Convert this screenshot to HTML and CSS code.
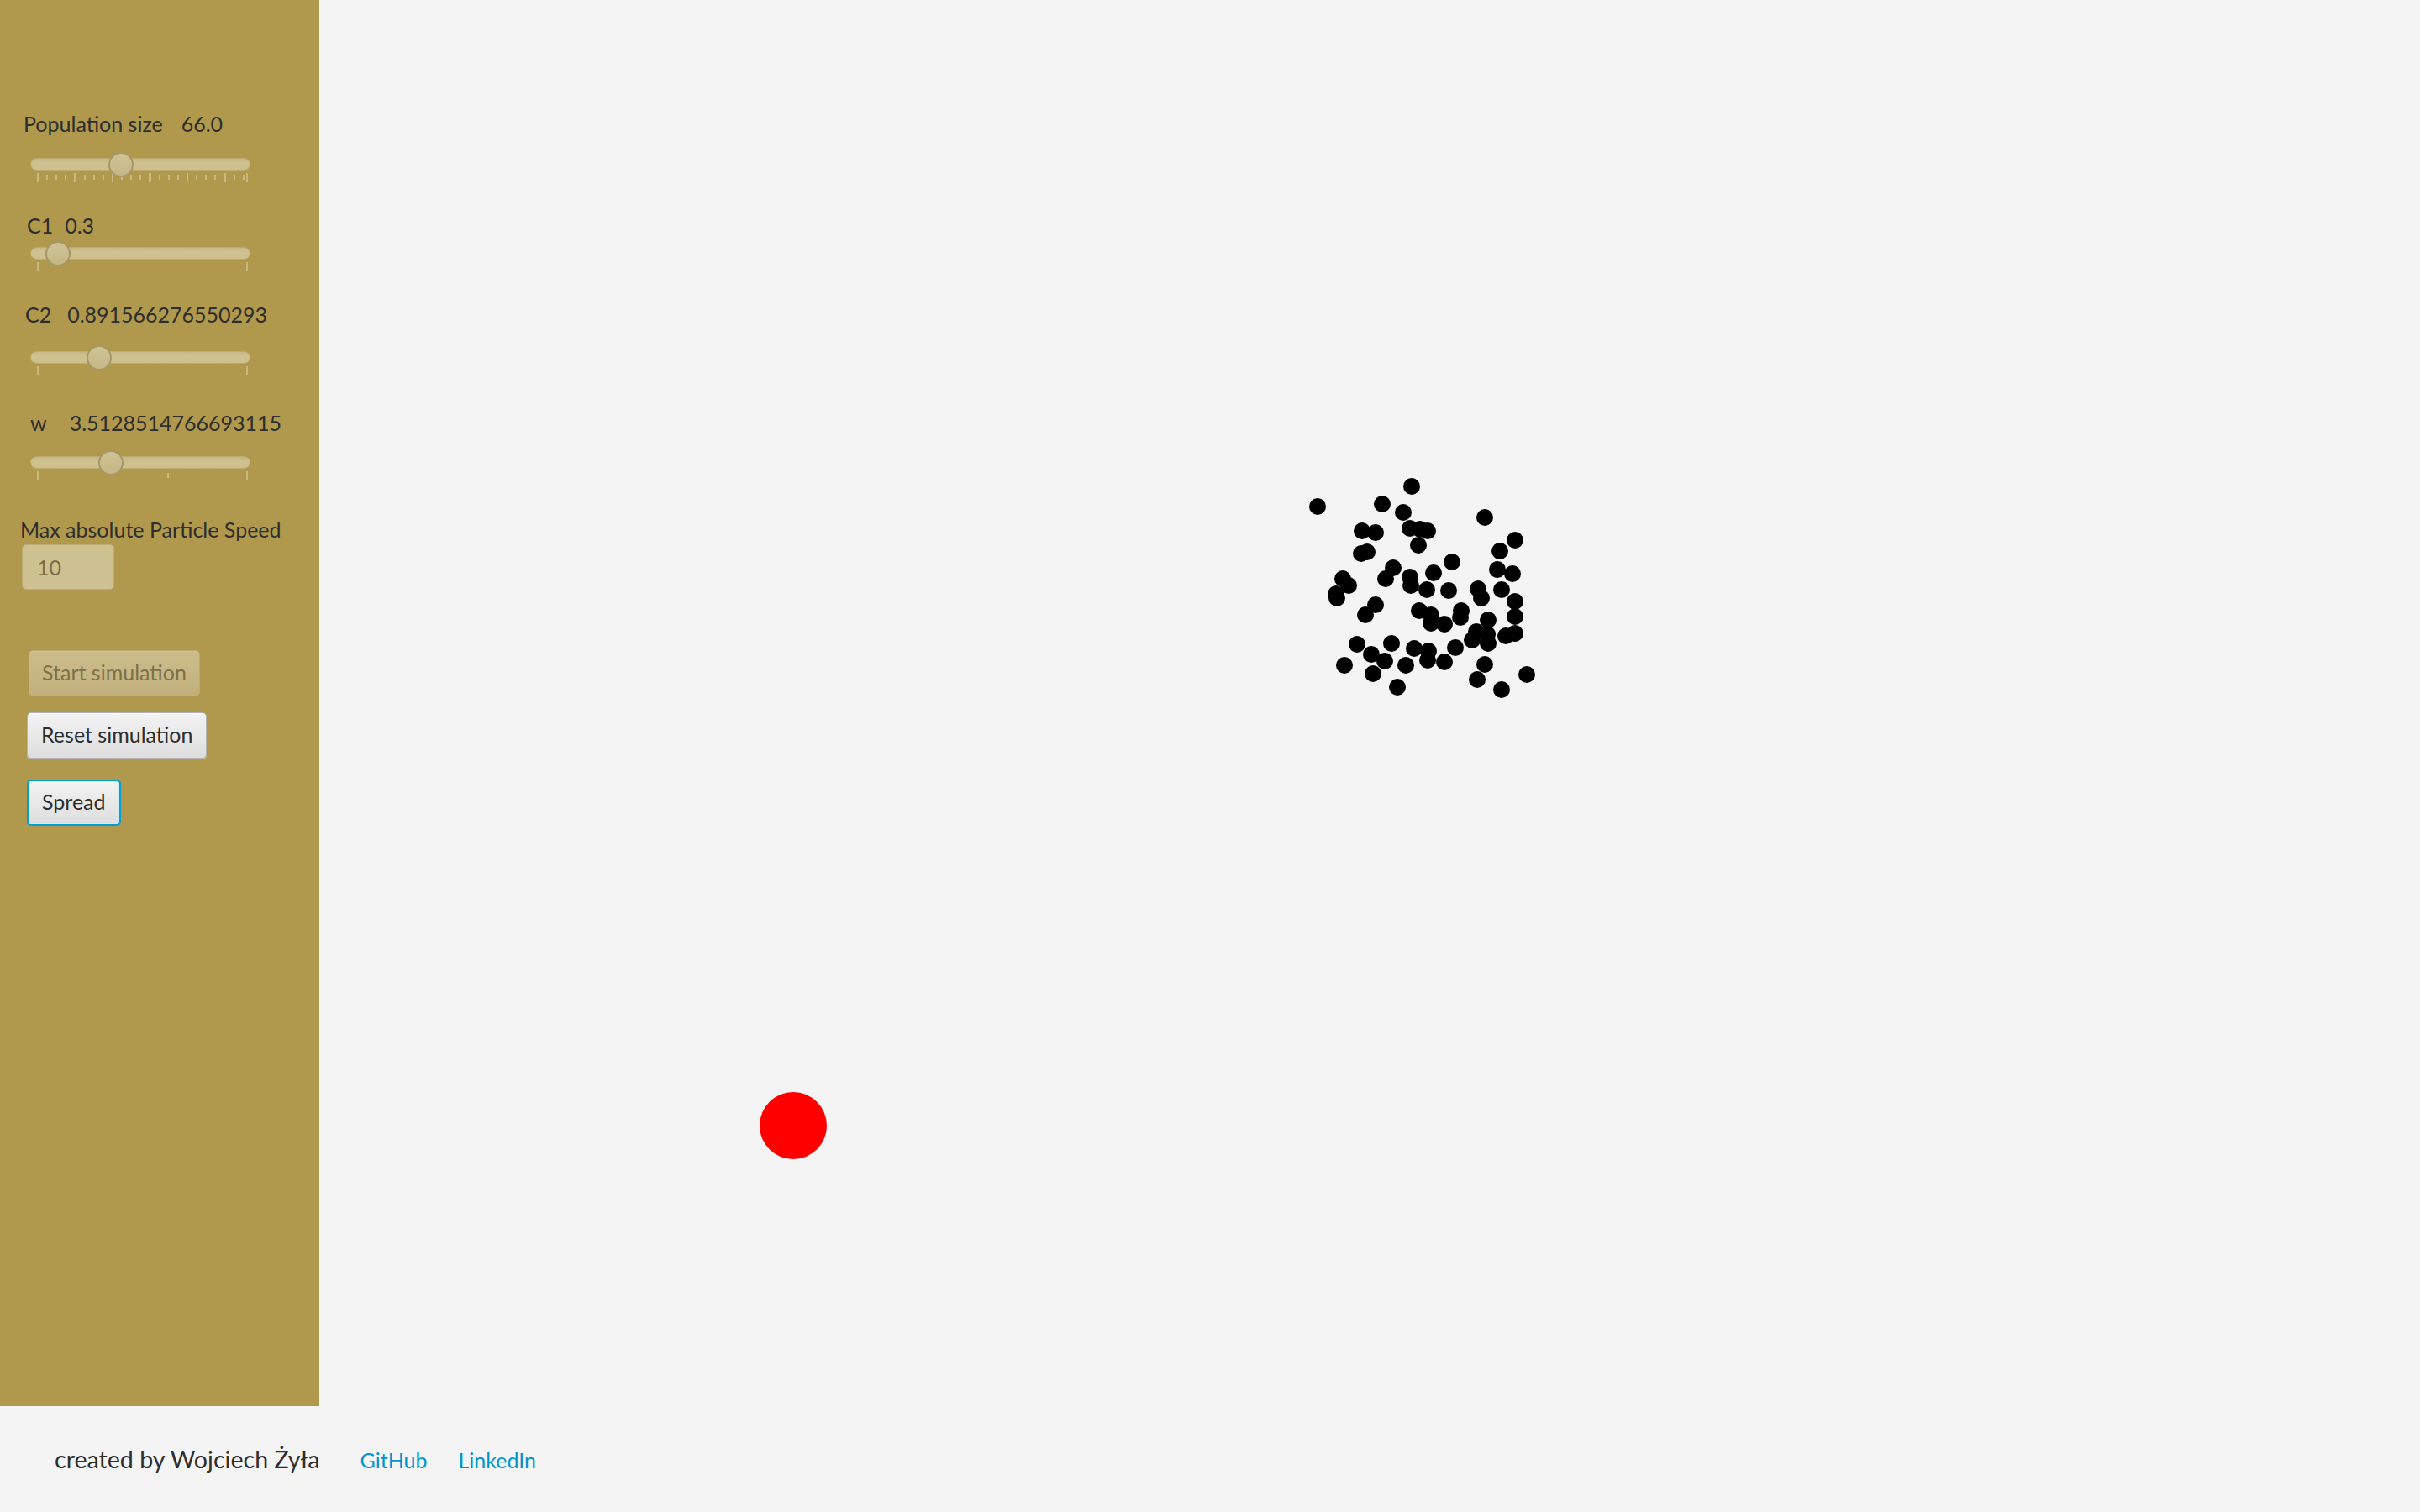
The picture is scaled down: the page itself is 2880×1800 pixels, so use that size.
FILE: index.html
```html
<!DOCTYPE html>
<html lang="en">
    <head>
        <meta charset="utf-8" />
        <meta name="viewport" content="width=device-width, initial-scale=1">
        <title>PSO simulation</title>
        <link rel="stylesheet" href="styles.css">
    </head>
    <body>
        <div class="app">
            <!-- settings panel -->
            <div class="sidebar">
                <div class="param param-pop">
                    <span class="param-name">Population size</span>
                    <span class="param-value">66.0</span>
                </div>
                <div class="slider slider-pop">
                    <div class="track"></div>
                    <div class="thumb" style="left: 93px"></div>
                    <div class="ticks ticks-fine"></div>
                </div>

                <div class="param param-c1">
                    <span class="param-name">C1</span>
                    <span class="param-value">0.3</span>
                </div>
                <div class="slider slider-c1">
                    <div class="track"></div>
                    <div class="thumb" style="left: 18px"></div>
                    <div class="ticks ticks-ends"></div>
                </div>

                <div class="param param-c2">
                    <span class="param-name">C2</span>
                    <span class="param-value">0.891566276550293</span>
                </div>
                <div class="slider slider-c2">
                    <div class="track"></div>
                    <div class="thumb" style="left: 67px"></div>
                    <div class="ticks ticks-ends"></div>
                </div>

                <div class="param param-w">
                    <span class="param-name">w</span>
                    <span class="param-value">3.5128514766693115</span>
                </div>
                <div class="slider slider-w">
                    <div class="track"></div>
                    <div class="thumb" style="left: 81px"></div>
                    <div class="ticks ticks-ends ticks-mid"></div>
                </div>

                <div class="param param-speed">
                    <span class="param-name">Max absolute Particle Speed</span>
                </div>
                <input class="speed-input" type="text" value="10">

                <button class="btn btn-start" disabled>Start simulation</button>
                <button class="btn btn-reset">Reset simulation</button>
                <button class="btn btn-spread">Spread</button>
            </div>

            <!-- simulation canvas -->
            <div class="canvas">
                <svg class="field" width="2500" height="1674" viewBox="0 0 2500 1674">
                    <circle class="target" cx="564" cy="1340" r="40" />
                    <g class="particles">
                        <circle cx="1300" cy="579" r="10" />
                        <circle cx="1188" cy="603" r="10" />
                        <circle cx="1265" cy="600" r="10" />
                        <circle cx="1290" cy="610" r="10" />
                        <circle cx="1387" cy="616" r="10" />
                        <circle cx="1241" cy="632" r="10" />
                        <circle cx="1257" cy="634" r="10" />
                        <circle cx="1298" cy="629" r="10" />
                        <circle cx="1310" cy="630" r="10" />
                        <circle cx="1319" cy="632" r="10" />
                        <circle cx="1308" cy="649" r="10" />
                        <circle cx="1423" cy="643" r="10" />
                        <circle cx="1405" cy="656" r="10" />
                        <circle cx="1247" cy="657" r="10" />
                        <circle cx="1240" cy="659" r="10" />
                        <circle cx="1348" cy="669" r="10" />
                        <circle cx="1278" cy="676" r="10" />
                        <circle cx="1269" cy="689" r="10" />
                        <circle cx="1298" cy="687" r="10" />
                        <circle cx="1326" cy="682" r="10" />
                        <circle cx="1402" cy="678" r="10" />
                        <circle cx="1420" cy="683" r="10" />
                        <circle cx="1218" cy="689" r="10" />
                        <circle cx="1225" cy="697" r="10" />
                        <circle cx="1210" cy="707" r="10" />
                        <circle cx="1211" cy="712" r="10" />
                        <circle cx="1299" cy="697" r="10" />
                        <circle cx="1318" cy="702" r="10" />
                        <circle cx="1344" cy="703" r="10" />
                        <circle cx="1379" cy="701" r="10" />
                        <circle cx="1383" cy="712" r="10" />
                        <circle cx="1407" cy="702" r="10" />
                        <circle cx="1423" cy="716" r="10" />
                        <circle cx="1257" cy="720" r="10" />
                        <circle cx="1245" cy="732" r="10" />
                        <circle cx="1309" cy="727" r="10" />
                        <circle cx="1323" cy="732" r="10" />
                        <circle cx="1323" cy="742" r="10" />
                        <circle cx="1339" cy="743" r="10" />
                        <circle cx="1359" cy="727" r="10" />
                        <circle cx="1358" cy="735" r="10" />
                        <circle cx="1391" cy="738" r="10" />
                        <circle cx="1423" cy="734" r="10" />
                        <circle cx="1377" cy="752" r="10" />
                        <circle cx="1372" cy="762" r="10" />
                        <circle cx="1390" cy="755" r="10" />
                        <circle cx="1391" cy="766" r="10" />
                        <circle cx="1412" cy="757" r="10" />
                        <circle cx="1423" cy="754" r="10" />
                        <circle cx="1235" cy="767" r="10" />
                        <circle cx="1276" cy="766" r="10" />
                        <circle cx="1303" cy="772" r="10" />
                        <circle cx="1320" cy="775" r="10" />
                        <circle cx="1319" cy="786" r="10" />
                        <circle cx="1352" cy="771" r="10" />
                        <circle cx="1252" cy="779" r="10" />
                        <circle cx="1268" cy="787" r="10" />
                        <circle cx="1220" cy="792" r="10" />
                        <circle cx="1293" cy="792" r="10" />
                        <circle cx="1339" cy="788" r="10" />
                        <circle cx="1387" cy="791" r="10" />
                        <circle cx="1254" cy="802" r="10" />
                        <circle cx="1378" cy="809" r="10" />
                        <circle cx="1437" cy="803" r="10" />
                        <circle cx="1283" cy="818" r="10" />
                        <circle cx="1407" cy="821" r="10" />
                    </g>
                </svg>
            </div>
        </div>

        <!-- footer -->
        <div class="footer">
            <span class="credit">created by Wojciech Żyła</span>
            <a class="footer-link link-github" href="#">GitHub</a>
            <a class="footer-link link-linkedin" href="#">LinkedIn</a>
        </div>
    </body>
</html>
```

FILE: styles.css
```css
body {
    margin: 0;
    background-color: #f4f4f4;
    font-family: Lato, "Liberation Sans", sans-serif;
    color: #333;
}

.app {
    display: flex;
    height: 1674px;
}

/* left settings panel */
.sidebar {
    width: 380px;
    flex-shrink: 0;
    box-sizing: border-box;
    padding-top: 132px;
    background-color: #b0994c;
    display: flex;
    flex-direction: column;
    align-items: flex-start;
}

.param {
    display: flex;
    height: 30px;
    font-size: 25px;
    line-height: 30px;
    white-space: nowrap;
    color: #2e2e2e;
}

.param-pop { padding-left: 28px; }
.param-pop .param-value { margin-left: 22px; }

.param-c1 { padding-left: 32px; margin-top: 36px; }
.param-c1 .param-value { margin-left: 14px; }

.param-c2 { padding-left: 30px; margin-top: 36px; }
.param-c2 .param-value { margin-left: 19px; }

.param-w { padding-left: 36px; margin-top: 41px; }
.param-w .param-value { margin-left: 27px; }

.param-speed { padding-left: 24px; margin-top: 43px; }

/* sliders */
.slider {
    position: relative;
    width: 262px;
    margin-left: 36px;
}

.slider-pop { margin-top: 26px; }
.slider-c1 { margin-top: 11px; }
.slider-c2 { margin-top: 29px; }
.slider-w { margin-top: 25px; }

.track {
    height: 15px;
    box-sizing: border-box;
    border: 1px solid #bcab70;
    border-radius: 8px;
    background: linear-gradient(#c6b883, #cfc291 40%, #cdc08e);
}

.thumb {
    position: absolute;
    top: -7.5px;
    width: 30px;
    height: 30px;
    box-sizing: border-box;
    border: 2px solid #a6976a;
    border-radius: 50%;
    background: linear-gradient(#cfc395, #c5b785);
}

.ticks {
    width: 251px;
    height: 11px;
    margin: 3px 0 0 8px;
}

.ticks-fine {
    background:
        linear-gradient(#c8b983, #c8b983) right top / 2px 11px no-repeat,
        repeating-linear-gradient(90deg, #c8b983 0 2px, transparent 2px 44.5px) 0 0 / 100% 11px no-repeat,
        repeating-linear-gradient(90deg, #c8b983 0 2px, transparent 2px 11.125px) 0 2px / 100% 6px no-repeat;
}

.ticks-ends {
    background:
        linear-gradient(#c8b983, #c8b983) left top / 2px 11px no-repeat,
        linear-gradient(#c8b983, #c8b983) right top / 2px 11px no-repeat;
}

.ticks-mid {
    background:
        linear-gradient(#c8b983, #c8b983) left top / 2px 11px no-repeat,
        linear-gradient(#c8b983, #c8b983) 155px 2px / 2px 6px no-repeat,
        linear-gradient(#c8b983, #c8b983) right top / 2px 11px no-repeat;
}

/* speed field */
.speed-input {
    margin: 3px 0 0 26px;
    width: 110px;
    height: 54px;
    box-sizing: border-box;
    padding: 0 0 0 17px;
    border: 1px solid #bdac74;
    border-radius: 5px;
    background-color: #cdc091;
    font-family: inherit;
    font-size: 25px;
    color: #7b6d45;
    outline: none;
}

/* buttons */
.btn {
    box-sizing: border-box;
    height: 55px;
    padding: 10px 15px 13px;
    border: 1px solid #b3b3b3;
    border-radius: 5px;
    background: linear-gradient(#f3f3f3, #dedede);
    box-shadow: inset 0 1px 0 #ffffff, 0 1px 0 #e3dab8;
    font-family: inherit;
    font-size: 25px;
    line-height: 30px;
    color: #2e2e2e;
    white-space: nowrap;
}

.btn-start {
    margin: 72px 0 0 34px;
    border-color: #bcaa72;
    background: linear-gradient(#cbbd8b, #c1b07c);
    box-shadow: inset 0 1px 0 #cfc296;
    color: #7e7048;
}

.btn-reset {
    margin: 19px 0 0 32px;
    padding-left: 16px;
    padding-right: 16px;
}

.btn-spread {
    margin: 25px 0 0 32px;
    border: 2px solid #049ed2;
    padding: 9px 16px 12px;
    box-shadow: inset 0 0 0 1px #d4ebf3;
}

/* simulation area */
.canvas {
    flex: 1;
    position: relative;
    background-color: #f4f4f4;
    overflow: hidden;
}

.field {
    display: block;
}

.target {
    fill: #ff0000;
}

.particles circle {
    fill: #000000;
}

/* footer */
.footer {
    height: 126px;
    box-sizing: border-box;
    padding: 46px 0 0 65px;
    display: flex;
    align-items: baseline;
}

.credit {
    font-size: 28.6px;
    line-height: 34px;
    color: #2e2e2e;
}

.footer-link {
    font-size: 25px;
    color: #0096c9;
    text-decoration: none;
}

.link-github { margin-left: 48px; }
.link-linkedin { margin-left: 37px; }
```
